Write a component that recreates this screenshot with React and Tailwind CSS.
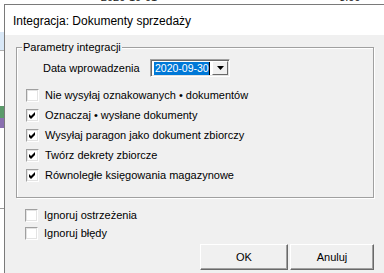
import React from 'react';

function CheckBox({ checked }) {
  return (
    <div className="w-[13px] h-[13px] shrink-0 bg-white border border-t-[#a0a0a0] border-l-[#a0a0a0] border-b-white border-r-white shadow-[inset_1px_1px_0_#e3e3e3,inset_-1px_-1px_0_#e3e3e3]">
      {checked && (
        <svg width="11" height="11" viewBox="0 0 11 11" className="block">
          <polygon points="2,4 4,6 8,2 8,5 4,9 2,7" fill="#000" />
        </svg>
      )}
    </div>
  );
}

function Row({ label, checked, tall }) {
  return (
    <div className={`flex items-center gap-[6px] ${tall ? 'h-[20px]' : 'h-[18px]'}`}>
      <CheckBox checked={checked} />
      <span>{label}</span>
    </div>
  );
}

function Button({ children, w }) {
  return (
    <button className={`${w} h-[26px] bg-[#f0f0f0] border border-t-white border-l-white border-r-[#696969] border-b-[#696969] shadow-[inset_-1px_-1px_0_#a0a0a0] text-[11px] text-black`}>
      {children}
    </button>
  );
}

export default function App() {
  const options = [
    ['Nie wysyłaj oznakowanych • dokumentów', false],
    ['Oznaczaj • wysłane dokumenty', true],
    ['Wysyłaj paragon jako dokument zbiorczy', true],
    ['Twórz dekrety zbiorcze', true],
    ['Równoległe księgowania magazynowe', true],
  ];

  return (
    <div className="w-[384px] h-[273px] overflow-hidden bg-white flex flex-col text-black font-['Liberation_Sans',Arial,sans-serif]">
      {/* tło aplikacji pod oknem */}
      <div className="h-[4px] overflow-hidden shrink-0">
        <div className="-mt-[9px] flex text-[11px] leading-[12px] text-[#222]">
          <span className="ml-[71px]">•</span>
          <span className="ml-[26px]">2020-10-01</span>
          <span className="ml-[182px]">3.09</span>
        </div>
      </div>

      <div className="flex flex-1 min-h-0">
        <div className="w-[4px] shrink-0 flex flex-col">
          <div className="h-[28px]" />
          <div className="h-[18px] bg-[#d9e8f7]" />
          <div className="h-[1px] bg-[#b0b0b0]" />
          <div className="h-[55px]" />
          <div className="h-[12px] bg-[#5a9a6a]" />
          <div className="h-[10px] bg-[#8a70b0]" />
          <div className="h-[80px]" />
          <div className="h-[1px] bg-[#9a9a9a]" />
        </div>

        <div className="flex-1 flex flex-col border-l border-t border-[#7a7a7a] min-w-0">
          <div className="h-[30px] shrink-0 bg-white flex items-center pl-[8px] text-[12px] pt-[1px]">
            Integracja: Dokumenty sprzedaży
          </div>

          <div className="flex-1 bg-[#f0f0f0] pl-[11px] pr-[10px] pt-[12px] text-[11px]">
            <div className="relative border border-[#a0a0a0] shadow-[inset_1px_1px_0_#fff,1px_1px_0_#fff] pt-[11px] pb-[12px] pl-[9px]">
              <span className="absolute -top-[7px] left-[5px] px-[1px] bg-[#f0f0f0] leading-[13px]">
                Parametry integracji
              </span>

              <div className="flex items-center h-[18px] pl-[17px]">
                <span className="w-[107px]">Data wprowadzenia</span>
                <div className="w-[80px] h-[18px] shrink-0 bg-white border border-t-[#a0a0a0] border-l-[#a0a0a0] border-b-white border-r-white shadow-[inset_1px_1px_0_#696969,inset_-1px_-1px_0_#e3e3e3] flex items-center pl-[3px] pr-[1px]">
                  <span className="shrink-0 whitespace-nowrap bg-[#0078d7] text-white text-[10.5px] leading-[13px] h-[13px] pl-[1px] border-r border-black">
                    2020-09-30
                  </span>
                  <div className="ml-auto shrink-0 w-[16px] h-[14px] bg-[#f0f0f0] border border-t-white border-l-white border-r-[#696969] border-b-[#696969] flex items-center justify-center">
                    <svg width="7" height="4" viewBox="0 0 7 4" className="block">
                      <polygon points="0,0 7,0 3.5,4" fill="#000" />
                    </svg>
                  </div>
                </div>
              </div>

              <div className="mt-[8px] flex flex-col">
                {options.map(([label, checked]) => (
                  <Row key={label} label={label} checked={checked} tall />
                ))}
              </div>
            </div>

            <div className="mt-[8px] pl-[9px] flex flex-col">
              <Row label="Ignoruj ostrzeżenia" checked={false} />
              <Row label="Ignoruj błędy" checked={false} />
            </div>

            <div className="mt-[2px] flex justify-end gap-[2px]">
              <Button w="w-[88px]">OK</Button>
              <Button w="w-[84px]">Anuluj</Button>
            </div>
          </div>
        </div>
      </div>
    </div>
  );
}
